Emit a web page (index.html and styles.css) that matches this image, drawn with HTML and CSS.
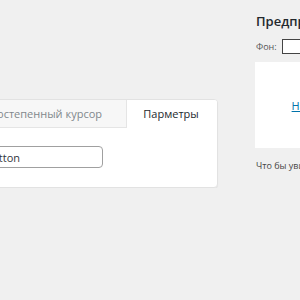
FILE: index.html
```html
<!DOCTYPE html>
<html lang="ru">
<head>
    <meta charset="UTF-8">
    <title>Курсор</title>
    <link rel="stylesheet" href="styles.css">
</head>
<body>
    <div class="pagina">
        <div class="ajustes">
            <div class="tarjeta">
                <div class="pestanas">
                    <div class="pestana">Постепенный курсор</div>
                    <div class="pestana activa">Парметры</div>
                </div>
                <div class="tarjeta-cuerpo">
                    <input type="text" class="campo" value="Button">
                </div>
            </div>
        </div>
        <div class="vista">
            <h2 class="vista-titulo">Предпросмотр</h2>
            <div class="fondo-fila">
                <label>Фон:</label>
                <input type="text" class="fondo-campo">
            </div>
            <div class="vista-panel">
                <a href="#">Наведите курсор</a>
            </div>
            <p class="vista-nota">Что бы увидеть эффект, наведите курсор</p>
        </div>
    </div>
</body>
</html>
```
FILE: styles.css
```css
body {
    margin: 0;
    background-color: #f0f0f0;
    font-family: "Open Sans", Arial, sans-serif;
    color: #23282d;
    overflow: hidden;
}
.pagina {
    display: flex;
    align-items: flex-start;
    width: 600px;
}
.ajustes {
    margin-top: 99px;
    margin-left: -40px;
    flex-shrink: 0;
}
.tarjeta {
    width: 256px;
    background-color: white;
    border: 1px solid #e2e2e2;
    border-radius: 4px;
    box-shadow: 0 1px 1px rgba(0,0,0,0.05);
    overflow: hidden;
}
.pestanas {
    display: flex;
    padding-left: 4px;
    background-color: #f7f7f7;
}
.pestana {
    padding: 0 24px;
    height: 27px;
    line-height: 27px;
    font-size: 11px;
    color: #82878c;
    border-bottom: 1px solid #e5e5e5;
    border-right: 1px solid #e5e5e5;
    white-space: nowrap;
}
.pestana.activa {
    flex: 1;
    text-align: center;
    color: #23282d;
    background-color: white;
    border-right: none;
    border-bottom-color: white;
    padding: 0 2px 0 0;
}
.tarjeta-cuerpo {
    padding: 18px 16px 19px 16px;
}
.campo {
    display: block;
    width: 126px;
    height: 22px;
    box-sizing: border-box;
    padding: 0 7px;
    font-family: "Open Sans", Arial, sans-serif;
    font-size: 11px;
    color: #32373c;
    border: 1px solid #a0a0a0;
    border-radius: 4px;
    background: white;
}
.vista {
    margin-left: 37px;
    width: 260px;
    flex-shrink: 0;
    padding-top: 11px;
}
.vista-titulo {
    margin: 0 0 0 1px;
    font-size: 13px;
    font-weight: 600;
    line-height: 20px;
}
.fondo-fila {
    display: flex;
    align-items: center;
    margin-top: 8px;
    margin-left: 1px;
    font-size: 9px;
    color: #555;
}
.fondo-campo {
    margin-left: 5px;
    width: 80px;
    height: 15px;
    box-sizing: border-box;
    border: 1px solid #444;
    background: white;
}
.vista-panel {
    margin-top: 8px;
    height: 86px;
    width: 164px;
    background-color: white;
    display: flex;
    align-items: center;
    justify-content: center;
    font-size: 11px;
}
.vista-panel a {
    color: #0073aa;
}
.vista-nota {
    margin: 11px 0 0 1px;
    font-size: 9px;
    color: #444;
}
```
